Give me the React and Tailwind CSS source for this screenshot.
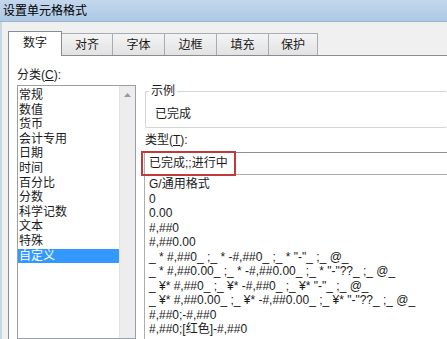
const categories = [
  "常规",
  "数值",
  "货币",
  "会计专用",
  "日期",
  "时间",
  "百分比",
  "分数",
  "科学记数",
  "文本",
  "特殊",
  "自定义",
];

const formats = [
  "G/通用格式",
  "0",
  "0.00",
  "#,##0",
  "#,##0.00",
  '_ * #,##0_ ;_ * -#,##0_ ;_ * "-"_ ;_ @_',
  '_ * #,##0.00_ ;_ * -#,##0.00_ ;_ * "-"??_ ;_ @_',
  '_ ¥* #,##0_ ;_ ¥* -#,##0_ ;_ ¥* "-"_ ;_ @_',
  '_ ¥* #,##0.00_ ;_ ¥* -#,##0.00_ ;_ ¥* "-"??_ ;_ @_',
  "#,##0;-#,##0",
  "#,##0;[红色]-#,##0",
];

const tabs = [
  { label: "数字", w: "w-[54px]" },
  { label: "对齐", w: "w-[52px]" },
  { label: "字体", w: "w-[53px]" },
  { label: "边框", w: "w-[53px]" },
  { label: "填充", w: "w-[53px]" },
  { label: "保护", w: "w-[50px]" },
];

export default function App() {
  return (
    <div className="flex h-[339px] w-[447px] flex-col overflow-hidden bg-[#f0f0f0] font-['Liberation_Sans','Noto_Sans_CJK_SC',sans-serif] text-[12px] text-[#1a1a1a]">
      {/* title bar */}
      <div className="flex h-[21px] shrink-0 items-center bg-gradient-to-b from-[#c3d7ec] to-[#adc9e6] pl-[3px] text-[12px] text-black">
        设置单元格格式
      </div>
      <div className="h-px shrink-0 bg-[#9fb4cb]" />

      <div className="flex min-h-0 flex-1 flex-col border-l-[2px] border-[#c9d6e4] pl-[6px]">
        {/* tabs */}
        <div className="flex h-[33px] shrink-0 items-end pt-[9px]">
          {tabs.map((t, i) =>
            i === 0 ? (
              <div
                key={t.label}
                className={`relative -mb-px flex h-[25px] ${t.w} items-center justify-center border border-b-0 border-[#898c95] bg-white pb-[2px]`}
              >
                {t.label}
              </div>
            ) : (
              <div
                key={t.label}
                className={`-ml-px flex h-[22px] ${t.w} items-center justify-center border border-b-0 border-[#a7abb2] bg-gradient-to-b from-[#f4f4f4] to-[#e2e2e2]`}
              >
                {t.label}
              </div>
            )
          )}
        </div>

        {/* panel */}
        <div className="flex min-h-0 flex-1 border-l border-t border-[#898c95] bg-white">
          {/* category column */}
          <div className="ml-[8px] flex w-[119px] shrink-0 flex-col">
            <div className="mt-[12px] h-[15px] leading-[15px]">
              分类(<span className="underline">C</span>):
            </div>
            <div className="mt-[2px] flex flex-1 border border-[#9a9ea6]">
              <div className="flex-1 pt-[2px]">
                {categories.map((c) => (
                  <div
                    key={c}
                    className={`h-[14.6px] pl-[1px] leading-[14.6px] ${
                      c === "自定义" ? "bg-[#3399ff] text-white" : ""
                    }`}
                  >
                    {c}
                  </div>
                ))}
              </div>
              <div className="flex w-[16px] flex-col items-center border-l border-[#e3e3e3] bg-[#ededed]">
                <svg width="7" height="4" viewBox="0 0 7 4" className="mt-[7px]">
                  <path d="M0 4 L3.5 0 L7 4 Z" fill="#9a9a9a" />
                </svg>
              </div>
            </div>
          </div>

          {/* right column */}
          <div className="ml-[5px] flex min-w-0 flex-1 flex-col">
            {/* sample group */}
            <div className="relative ml-[4px] mt-[35px] h-[37px] rounded-[2px] border border-r-0 border-[#d5d5d5] pl-[9px] pt-[15px] leading-[14.6px]">
              <span className="absolute -top-[8px] left-[3px] bg-white px-[2px] leading-[14.6px]">
                示例
              </span>
              已完成
            </div>

            <div className="ml-[4px] mt-[5px] h-[15px] leading-[15px]">
              类型(<span className="underline">T</span>):
            </div>

            {/* input */}
            <div className="relative mt-[4px] ml-[3px] flex h-[23px] items-center border border-r-0 border-[#abadb3] border-t-[#8e9199] pl-[4px] leading-[14.6px]">
              已完成;;进行中
              <div className="absolute -left-[4px] -top-[2px] h-[25px] w-[95px] border-2 border-[#c0393b]" />
            </div>

            {/* format list */}
            <div className="ml-[3px] flex-1 border-l border-[#abadb3] pl-[4px] pt-[2px]">
              {formats.map((f) => (
                <div key={f} className="h-[14.5px] whitespace-pre leading-[14.5px]">
                  {f}
                </div>
              ))}
            </div>
          </div>
        </div>
      </div>
    </div>
  );
}
